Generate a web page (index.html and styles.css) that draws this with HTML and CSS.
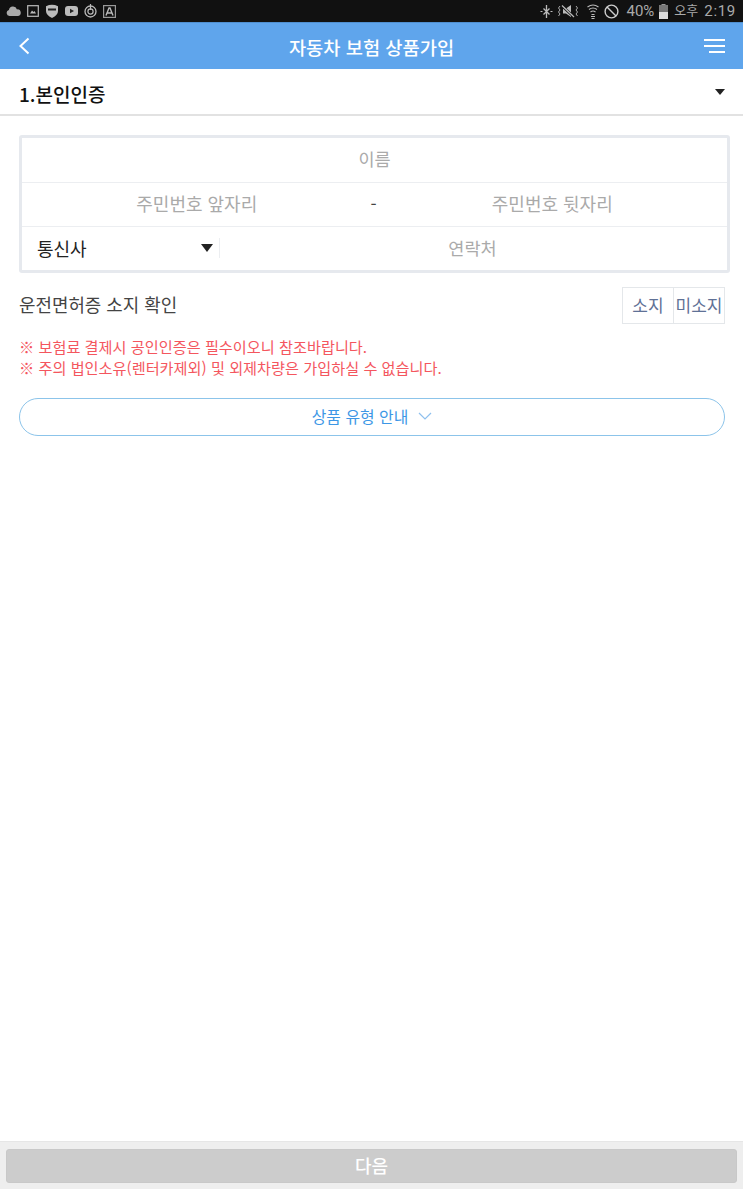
FILE: index.html
```html
<!DOCTYPE html>
<html lang="ko">
<head>
  <meta charset="UTF-8">
  <title>자동차 보험 상품가입</title>
  <link rel="stylesheet" href="styles.css">
</head>
<body>
  <div class="status-bar">
    <div class="status-left">
      <svg width="15" height="10" viewBox="0 0 15 10"><path d="M3.500 10a3 3 0 0 1-.6-5.900A4.200 4.200 0 0 1 11 3.400 3.300 3.300 0 0 1 11.800 10z" fill="#aaa"/></svg>
      <svg width="12" height="12" viewBox="0 0 12 12"><rect x=".7" y=".7" width="10.600" height="10.600" fill="none" stroke="#bbb" stroke-width="1.200"/><path d="M3 8.500l2-3 1.500 1.500 1-1 1.500 2.500z" fill="#bbb"/></svg>
      <svg width="14" height="14" viewBox="0 0 14 14"><path d="M1 2.200Q7 -.5 13 2.200V7Q13 11 7 14 1 11 1 7z" fill="#bbb"/><rect x="3" y="4.500" width="8" height="2" fill="#222"/></svg>
      <svg width="13" height="10" viewBox="0 0 13 10"><rect width="13" height="10" rx="3" fill="#bbb"/><path d="M5 2.800v4.400L9 5z" fill="#222"/></svg>
      <svg width="13" height="14" viewBox="0 0 13 14"><circle cx="6.500" cy="7.500" r="5.500" fill="none" stroke="#bbb" stroke-width="1.300"/><circle cx="6.500" cy="7.500" r="2.600" fill="none" stroke="#bbb" stroke-width="1.200"/><path d="M6.500 0v6" stroke="#bbb" stroke-width="1.200"/></svg>
      <svg width="13" height="13" viewBox="0 0 13 13"><rect x=".6" y=".6" width="11.800" height="11.800" fill="none" stroke="#999" stroke-width="1.200"/><path d="M3 10.500L6 3h1l3 7.500M4.300 8h4.400" fill="none" stroke="#bbb" stroke-width="1.400"/></svg>
    </div>
    <div class="status-right">
      <svg width="13" height="13" viewBox="0 0 13 13"><path d="M6.500 0v13M3.500 3.500l6 6M9.500 3.500l-6 6" stroke="#bbb" stroke-width="1.300" fill="none"/><path d="M.5 6.500h2M10.500 6.500h2" stroke="#bbb"/></svg>
      <svg class="icon-mute" width="21" height="14" viewBox="0 0 21 14"><path d="M5 4.500h3l5-3.500v12L8 9.500H5z" fill="#bbb"/><path d="M3 1l13 12" stroke="#111" stroke-width="2.500"/><path d="M4 1.500l12 11.500" stroke="#bbb" stroke-width="1.200"/><path d="M2 2L.5 4 2 6 .5 8 2 10 .5 12M18 2l1.500 2L18 6l1.500 2L18 10l1.500 2" fill="none" stroke="#aaa"/></svg>
      <svg class="icon-wifi" width="12" height="15" viewBox="0 0 12 15"><path d="M.5 3Q6-1 11.500 3M2 5.500q4-3 8 0M3.500 8q2.500-2 5 0" fill="none" stroke="#bbb" stroke-width="1.100"/><path d="M4.500 10h3v1h-3zM4 12h4v1H4zM4.500 14h3v1h-3z" fill="#bbb"/></svg>
      <svg class="icon-block" width="15" height="15" viewBox="0 0 15 15"><circle cx="7.500" cy="7.500" r="6.400" fill="none" stroke="#ccc" stroke-width="1.400"/><path d="M3 3l9 9" stroke="#ccc" stroke-width="1.400"/></svg>
      <span class="status-pct">40%</span>
      <svg class="icon-batt" width="9" height="15" viewBox="0 0 9 15"><rect x="2.500" width="4" height="1.500" fill="#999"/><rect y="1" width="9" height="14" fill="#777"/><rect y="8" width="9" height="7" fill="#ddd"/></svg>
      <span class="status-ampm">오후</span>
      <span class="status-time">2:19</span>
    </div>
  </div>

  <header class="app-header">
    <svg class="back" width="12" height="18" viewBox="0 0 12 18"><path d="M10.500 1.500L2.500 9l8 7.500" fill="none" stroke="#fff" stroke-width="2"/></svg>
    <h1>자동차 보험 상품가입</h1>
    <div class="menu"><i></i><i></i><i class="short"></i></div>
  </header>

  <div class="section-title">
    <h2>1.본인인증</h2>
    <span class="caret small"></span>
  </div>

  <main class="content">
    <div class="form-box">
      <div class="form-row">
        <span class="ph">이름</span>
      </div>
      <div class="form-row">
        <span class="ph cell front">주민번호 앞자리</span>
        <span class="dash">-</span>
        <span class="ph cell back-num">주민번호 뒷자리</span>
      </div>
      <div class="form-row">
        <div class="carrier"><span>통신사</span><span class="caret"></span></div>
        <span class="ph phone">연락처</span>
      </div>
    </div>

    <div class="license-row">
      <span class="license-label">운전면허증 소지 확인</span>
      <div class="toggle">
        <span>소지</span>
        <span>미소지</span>
      </div>
    </div>

    <div class="notes">
      <p>※ 보험료 결제시 공인인증은 필수이오니 참조바랍니다.</p>
      <p>※ 주의 법인소유(렌터카제외) 및 외제차량은 가입하실 수 없습니다.</p>
    </div>

    <div class="guide-btn">
      <span>상품 유형 안내</span>
      <svg width="14" height="8" viewBox="0 0 14 8"><path d="M1 1l6 6 6-6" fill="none" stroke="#8fc0ee" stroke-width="1.200"/></svg>
    </div>
  </main>

  <footer class="bottom-bar">
    <div class="next-btn">다음</div>
  </footer>
</body>
</html>
```

FILE: styles.css
```css
* {
  box-sizing: border-box;
}

html, body {
  height: 100%;
}

body {
  margin: 0;
  font-family: "Noto Sans CJK KR", "Noto Sans", sans-serif;
  background: #fff;
  color: #333;
  display: flex;
  flex-direction: column;
  height: 1189px;
  overflow: hidden;
}

.status-bar {
  height: 22px;
  background: #111;
  color: #aaa;
  display: flex;
  justify-content: space-between;
  align-items: center;
  padding: 0 7px 0 6px;
}

.status-left, .status-right {
  display: flex;
  align-items: center;
}

.status-left {
  gap: 6px;
}

.status-right {
  font-family: "Roboto", "Noto Sans CJK KR", sans-serif;
  font-size: 15px;
  line-height: 22px;
}

.icon-mute { margin-left: 5px; }
.icon-wifi { margin-left: 8px; }
.icon-block { margin-left: 5px; }
.status-pct { margin-left: 7px; }
.icon-batt { margin-left: 5px; }
.status-ampm { margin-left: 6px; font-size: 13px; }
.status-time { margin-left: 6px; letter-spacing: 0.7px; }

.app-header {
  height: 47px;
  background: #5fa5ec;
  display: flex;
  align-items: center;
  justify-content: space-between;
  padding: 0 18px;
  border-top: 1px solid #4f8fd0;
}

.app-header h1 {
  margin: 0 0 0 9px;
  font-size: 18.700px;
  font-weight: 500;
  color: #fff;
}

.menu {
  width: 21px;
  display: flex;
  flex-direction: column;
  gap: 4px;
}

.menu i {
  display: block;
  height: 2px;
  background: #fff;
}

.menu i.short {
  width: 16px;
  margin-left: 5px;
}

.section-title {
  height: 47px;
  border-bottom: 2px solid #e2e2e2;
  display: flex;
  align-items: center;
  justify-content: space-between;
  padding: 3px 19px 0;
}

.section-title h2 {
  margin: 0;
  font-size: 19px;
  font-weight: 500;
  color: #111;
}

.caret {
  width: 0;
  height: 0;
  border-left: 6px solid transparent;
  border-right: 6px solid transparent;
  border-top: 8px solid #222;
}

.caret.small {
  border-left-width: 5px;
  border-right-width: 5px;
  border-top-width: 6px;
  margin-bottom: 2px;
  margin-right: -1px;
}

.content {
  flex: 1;
  padding: 19px 19px 0;
}

.form-box {
  width: 711px;
  height: 138px;
  border: 3px solid #e6e9ee;
  border-radius: 3px;
}

.form-row {
  height: 44.500px;
  padding-bottom: 2px;
  display: flex;
  align-items: center;
  justify-content: center;
  font-size: 17.500px;
  border-bottom: 1px solid #eceef1;
}

.form-row:last-child {
  border-bottom: 0;
  padding-bottom: 3px;
}

.ph {
  color: #aaa;
}

.ph.cell {
  flex: 1;
  text-align: center;
  font-size: 18px;
}

.ph.front {
  padding-right: 6px;
}

.ph.back-num {
  padding-left: 4px;
}

.dash {
  width: 0;
  flex: 0 0 0;
  margin-left: -4px;
  display: flex;
  justify-content: center;
  color: #444;
}

.carrier {
  width: 198px;
  height: 20px;
  display: flex;
  align-items: center;
  justify-content: space-between;
  padding: 0 6px 0 15px;
  border-right: 1px solid #eceef1;
  color: #222;
  font-size: 18px;
}

.phone {
  flex: 1;
  text-align: center;
  padding-right: 2px;
}

.license-row {
  width: 706px;
  margin-top: 14px;
  display: flex;
  align-items: center;
  justify-content: space-between;
}

.license-label {
  font-size: 17.900px;
  color: #444;
  padding-bottom: 4px;
}

.toggle {
  display: flex;
  height: 37px;
  border: 1px solid #e4e7ea;
  font-size: 17px;
  color: #5f7196;
}

.toggle span {
  display: flex;
  align-items: center;
  justify-content: center;
  padding-bottom: 2px;
}

.toggle span:first-child {
  width: 51px;
  border-right: 1px solid #e4e7ea;
}

.toggle span:last-child {
  width: 50px;
}

.notes {
  margin-top: 12px;
  font-size: 15.200px;
  line-height: 21px;
  color: #f4565e;
}

.notes p {
  margin: 0;
}

.guide-btn {
  width: 706px;
  height: 38px;
  margin-top: 20px;
  padding-bottom: 2px;
  border: 1px solid #8cc4ea;
  border-radius: 19px;
  display: flex;
  align-items: center;
  justify-content: center;
  gap: 10px;
  font-size: 15.900px;
  color: #3d97e6;
}

.bottom-bar {
  height: 48px;
  background: #eee;
  border-top: 1px solid #e6e6e6;
  padding: 7px 6px 6px;
}

.next-btn {
  height: 34px;
  padding-bottom: 3px;
  background: #ccc;
  border: 1px solid #c8c8c8;
  border-radius: 3px;
  display: flex;
  align-items: center;
  justify-content: center;
  font-size: 18px;
  font-weight: 500;
  color: #fff;
}
```
